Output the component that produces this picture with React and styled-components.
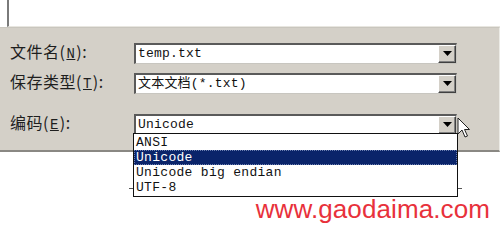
import * as React from "react"
import styled, { createGlobalStyle } from "styled-components"

const GlobalStyle = createGlobalStyle`
  html, body {
    margin: 0;
    padding: 0;
    background: #ffffff;
  }
  body {
    width: 500px;
    height: 227px;
    overflow: hidden;
  }
`

const cjk = `"SimSun", "Noto Sans CJK SC", "DejaVu Sans", sans-serif`
const mono = `"Liberation Mono", "DejaVu Sans Mono", monospace`

const Screen = styled.div`
  position: relative;
  width: 500px;
  height: 227px;
  background: #ffffff;
  overflow: hidden;
`

const FileWell = styled.div`
  height: 26px;
  margin-left: 7px;
  border-left: 2px solid #7a7a7a;
  border-bottom: 1px solid #e8e6e0;
  background: #ffffff;
`

const Panel = styled.div`
  background: #d4d0c8;
  height: 125px;
  padding: 13px 0 0 10px;
  box-sizing: border-box;
  border-top: 1px solid #c9c6be;
  border-right: 1px solid #ecebe6;
  border-bottom: 2px solid #8a8883;
  display: flex;
  flex-direction: column;
  gap: 9px;
`

const Row = styled.div`
  height: 21px;
  display: grid;
  grid-template-columns: 124px 323px;
  align-items: center;
  margin-top: ${({ $extra }) => $extra || 0}px;
`

const Label = styled.span`
  font-family: ${cjk};
  font-size: 16px;
  line-height: 21px;
  color: #1e1e1e;
  white-space: nowrap;
  letter-spacing: 0.5px;

  u {
    font-family: ${mono};
    font-size: 14px;
    margin: 0 1px;
  }
`

const Combo = styled.div`
  height: 21px;
  box-sizing: border-box;
  background: #ffffff;
  border-top: 2px solid #5a5a5a;
  border-left: 2px solid #5a5a5a;
  border-right: 1px solid #c8c6c0;
  border-bottom: 1px solid #c8c6c0;
  display: flex;
  align-items: center;
  justify-content: space-between;
  padding-left: 2px;
`

const ComboText = styled.span`
  font-family: ${mono}, ${cjk};
  font-size: 13px;
  line-height: 17px;
  color: #111;
  white-space: nowrap;
  letter-spacing: 0.2px;
`

const ArrowButton = styled.div`
  width: 18px;
  height: 18px;
  box-sizing: border-box;
  background: #d4d0c8;
  border-top: 1px solid #ffffff;
  border-left: 1px solid #ffffff;
  border-right: 1px solid #404040;
  border-bottom: 1px solid #404040;
  box-shadow: inset -1px -1px 0 #808080;
  display: flex;
  align-items: center;
  justify-content: center;
`

const Arrow = () => (
  <svg width="9" height="5" viewBox="0 0 9 5">
    <path d="M0 0 H9 L4.5 5 Z" fill="#000" />
  </svg>
)

const List = styled.div`
  position: absolute;
  left: 133px;
  top: 133px;
  width: 325px;
  box-sizing: border-box;
  background: #ffffff;
  border: 1px solid #111;
  padding: 1px 0;
`

const Option = styled.div`
  height: 15px;
  line-height: 15px;
  padding-left: 2px;
  font-family: ${mono};
  font-size: 13px;
  letter-spacing: 0.3px;
  color: ${({ $selected }) => ($selected ? "#ffffff" : "#111")};
  background: ${({ $selected }) => ($selected ? "#0a246a" : "transparent")};
  outline: ${({ $selected }) => ($selected ? "1px dotted #6b7fb0" : "none")};
  outline-offset: -1px;
  white-space: nowrap;
`

const Tick = styled.span`
  position: absolute;
  top: 188px;
  left: ${({ $left }) => $left}px;
  width: 4px;
  height: 1px;
  background: #555;
`

const Cursor = styled.svg`
  position: absolute;
  left: 457px;
  top: 117px;
`

const Watermark = styled.div`
  position: absolute;
  right: 10px;
  top: 194px;
  font-family: "Liberation Sans", Arial, sans-serif;
  font-size: 26px;
  color: #e8313b;
  letter-spacing: 0.1px;
`

const fields = [
  { label: "文件名", key: "N", value: "temp.txt" },
  { label: "保存类型", key: "T", value: "文本文档(*.txt)" },
  { label: "编码", key: "E", value: "Unicode", extra: 11 },
]

const options = ["ANSI", "Unicode", "Unicode big endian", "UTF-8"]

export default function App() {
  return (
    <Screen>
      <GlobalStyle />
      <FileWell />
      <Panel>
        {fields.map((f) => (
          <Row key={f.key} $extra={f.extra}>
            <Label>
              {f.label}(<u>{f.key}</u>):
            </Label>
            <Combo>
              <ComboText>{f.value}</ComboText>
              <ArrowButton>
                <Arrow />
              </ArrowButton>
            </Combo>
          </Row>
        ))}
      </Panel>

      <List>
        {options.map((o) => (
          <Option key={o} $selected={o === "Unicode"}>
            {o}
          </Option>
        ))}
      </List>
      <Tick $left={129} />
      <Tick $left={458} />

      <Cursor width="14" height="22" viewBox="0 0 14 22">
        <path
          d="M1 1 V17 L5 13 L8 20 L10.5 19 L7.5 12.5 H12.5 Z"
          fill="#ffffff"
          stroke="#222"
          strokeWidth="1"
          strokeLinejoin="round"
        />
      </Cursor>

      <Watermark>www.gaodaima.com</Watermark>
    </Screen>
  )
}
